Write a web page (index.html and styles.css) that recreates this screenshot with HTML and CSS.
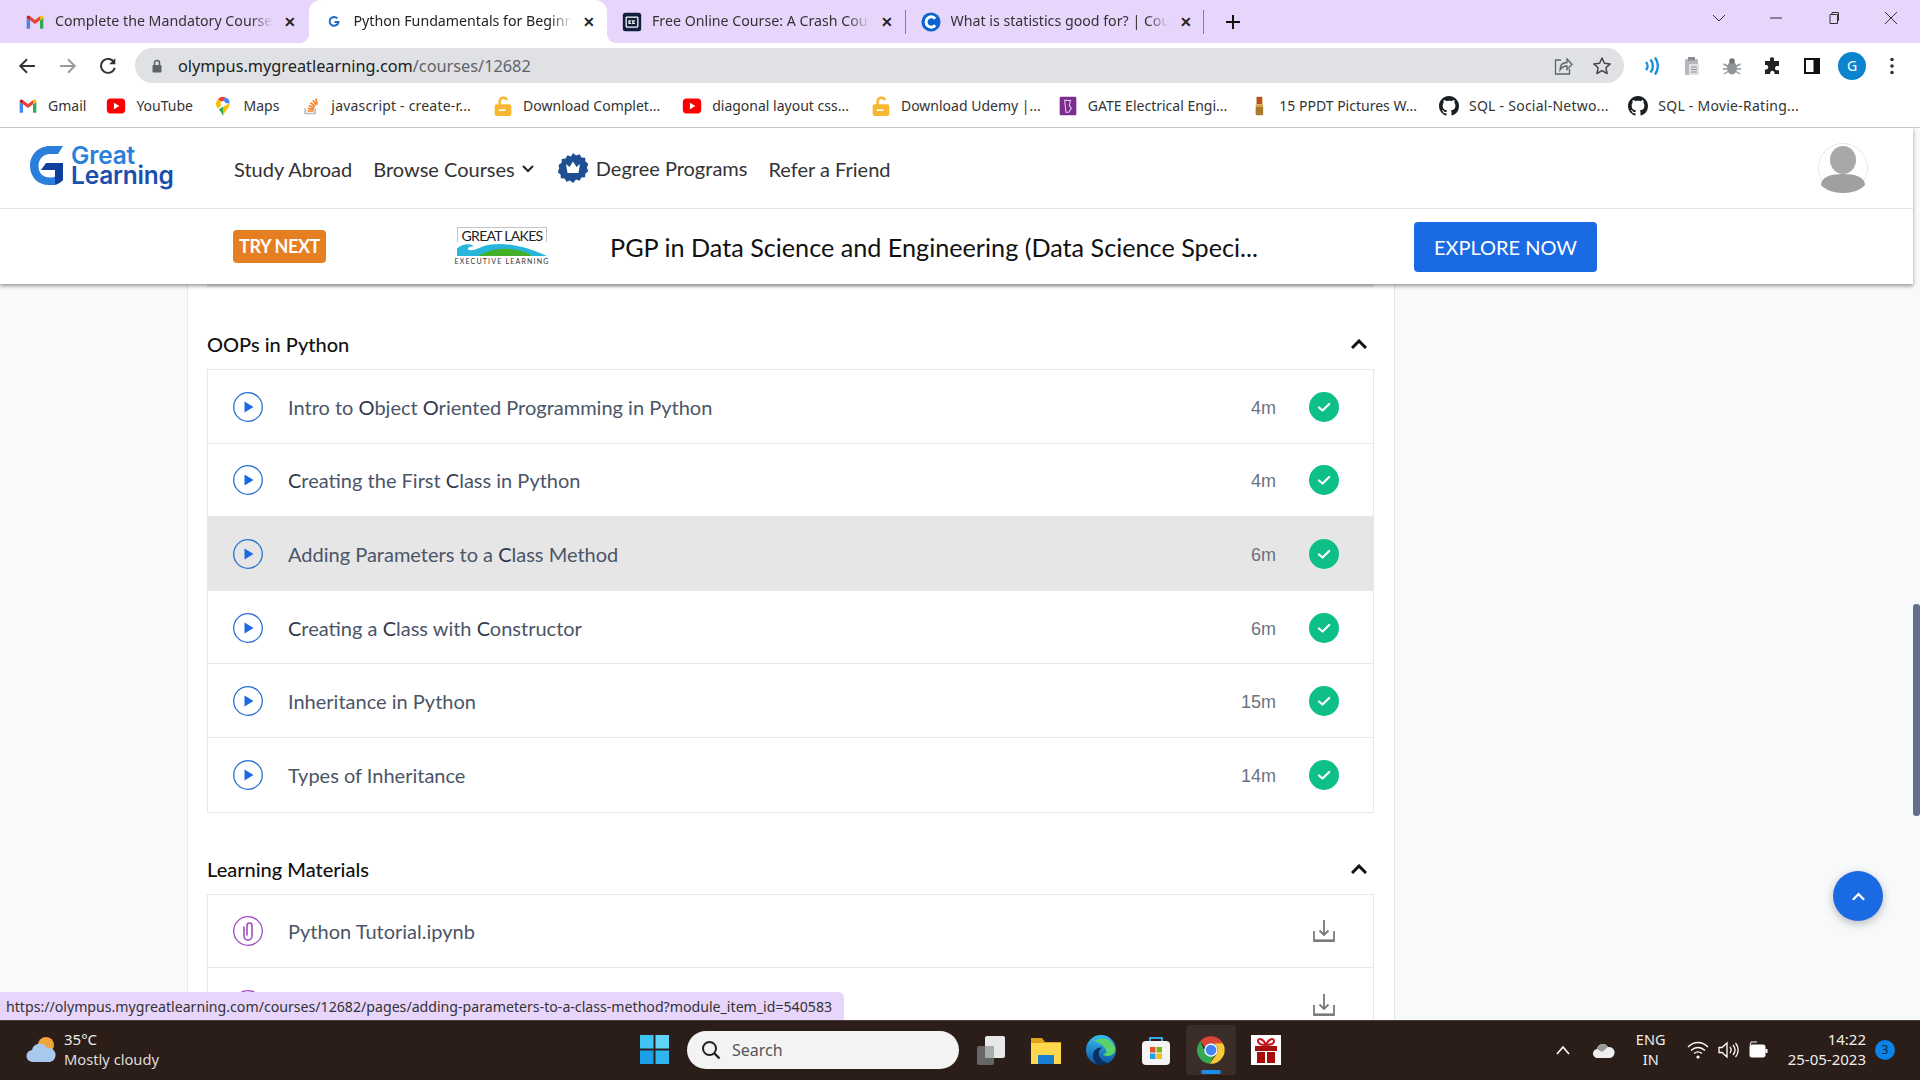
FILE: index.html
```html
<!DOCTYPE html>
<html lang="en">
<head>
    <meta charset="UTF-8">
    <title>Python Fundamentals for Beginners</title>
    <link rel="stylesheet" href="styles.css">
</head>
<body>
    <svg class="defs" width="0" height="0">
        <symbol id="i-gmail" viewBox="0 0 24 24">
            <path fill="#4285F4" d="M2 20h4V10L2 7z"/>
            <path fill="#34A853" d="M18 20h4V7l-4 3z"/>
            <path fill="#EA4335" d="M6 10V5l6 4.500L18 5v5l-6 4.500z"/>
            <path fill="#C5221F" d="M2 7v-.5C2 4.500 4.300 3.400 6 5v5z"/>
            <path fill="#FBBC04" d="M22 7v-.5c0-2-2.300-3.100-4-1.500v5z"/>
        </symbol>
        <symbol id="i-yt" viewBox="0 0 24 24">
            <rect x="1" y="3" width="22" height="18" rx="4.500" fill="#f00"/>
            <path fill="#fff" d="M9.500 8v8l6.500-4z"/>
        </symbol>
        <symbol id="i-maps" viewBox="0 0 24 24">
            <path fill="#34A853" d="M12 24c-1-3-3-5-5-8l5-3z"/>
            <path fill="#FBBC04" d="M12 24c1-3 3-5 5-8 1.500-2 3-4 3-7l-8 4z"/>
            <path fill="#4285F4" d="M20 9A8 8 0 0 0 14.500 1.400L10 8z"/>
            <path fill="#EA4335" d="M14.500 1.400A8 8 0 0 0 6 3.500l5 5z"/>
            <path fill="#FBBC04" d="M6 3.500A8 8 0 0 0 6 15l6-6z"/>
            <circle cx="12" cy="9" r="3" fill="#fff"/>
        </symbol>
        <symbol id="i-so" viewBox="0 0 24 24">
            <path fill="none" stroke="#bcbbbb" stroke-width="2" d="M5 15v6h12v-6"/>
            <path fill="none" stroke="#f48024" stroke-width="2" d="M8 18h7M8.300 14.800l7 1.400M9.300 11.300l6.500 3M11.300 8l5.500 4.600M14.300 5l4 5.700M18 3l1.200 7"/>
        </symbol>
        <symbol id="i-lock" viewBox="0 0 24 24">
            <path fill="none" stroke="#f7b731" stroke-width="3" d="M8 11V6.500a4.500 4.500 0 0 1 8.700-1.500"/>
            <rect x="2" y="10" width="20" height="14" rx="2.500" fill="#f7b731"/>
            <path fill="#fff" d="M7 16h8v2H7z"/>
        </symbol>
        <symbol id="i-gh" viewBox="0 0 16 16">
            <path fill="#1b1f23" d="M8 0C3.580 0 0 3.580 0 8c0 3.540 2.290 6.530 5.470 7.590.4.070.55-.17.55-.38 0-.19-.010-.82-.010-1.490-2.010.37-2.530-.49-2.690-.94-.090-.23-.48-.94-.82-1.130-.28-.15-.68-.52-.010-.53.63-.010 1.080.58 1.230.82.72 1.210 1.870.87 2.330.66.070-.52.28-.87.510-1.070-1.780-.2-3.640-.89-3.640-3.950 0-.87.310-1.590.820-2.150-.080-.2-.360-1.020.080-2.120 0 0 .670-.210 2.200.820.640-.180 1.320-.270 2-.270s1.360.090 2 .270c1.530-1.040 2.200-.820 2.200-.820.440 1.100.160 1.920.080 2.120.510.560.820 1.270.820 2.150 0 3.070-1.870 3.750-3.650 3.950.290.250.540.730.540 1.480 0 1.070-.010 1.930-.010 2.200 0 .210.150.460.550.380A8.013 8.013 0 0 0 16 8c0-4.420-3.580-8-8-8z"/>
        </symbol>
        <symbol id="i-play" viewBox="0 0 30 30">
            <circle cx="15" cy="15" r="14.300" fill="none" stroke="#2a70cf" stroke-width="1.300"/>
            <path fill="#1a6ae4" d="M11.500 9.500v11l9-5.500z"/>
        </symbol>
        <symbol id="i-check" viewBox="0 0 30 30">
            <circle cx="15" cy="15" r="15" fill="#0fbf88"/>
            <path fill="none" stroke="#fff" stroke-width="2.200" stroke-linecap="round" stroke-linejoin="round" d="M10 15.500l3.500 3L20.200 12"/>
        </symbol>
        <symbol id="i-up" viewBox="0 0 16 10">
            <path fill="none" stroke="currentColor" stroke-width="3" d="M1 9l7-7 7 7"/>
        </symbol>
        <symbol id="i-clip" viewBox="0 0 30 30">
            <circle cx="15" cy="15" r="14.300" fill="none" stroke="#a24cc0" stroke-width="1.300"/>
            <path fill="none" stroke="#a24cc0" stroke-width="1.600" stroke-linecap="round" d="M11 11v9a4 4 0 0 0 8 0V9.500a2.500 2.500 0 0 0-5 0V19"/>
        </symbol>
        <symbol id="i-down" viewBox="0 0 24 24">
            <path fill="none" stroke="#7a7a7a" stroke-width="1.800" d="M12 1v15M7.500 11.500L12 16l4.500-4.500M2 12v10h20V12"/>
            <path stroke="#7a7a7a" stroke-width="2.200" d="M2 21.500h20"/>
        </symbol>
    </svg>

    <div class="tabstrip">
        <div class="tab">
            <svg class="tab-icon"><use href="#i-gmail"/></svg>
            <span class="tab-title">Complete the Mandatory Course</span>
            <span class="tab-close">✕</span>
        </div>
        <div class="tab active">
            <svg class="tab-icon" viewBox="-6 -6 36 36"><path fill="none" stroke="#2167c5" stroke-width="3.500" d="M18 5.500A8 8 0 1 0 20 12h-7"/></svg>
            <span class="tab-title">Python Fundamentals for Beginn</span>
            <span class="tab-close">✕</span>
        </div>
        <div class="tab sep">
            <svg class="tab-icon" viewBox="0 0 24 24"><rect x="1" y="1" width="22" height="22" rx="3" fill="#0f1f3d"/><rect x="5" y="6" width="14" height="12" rx="1" fill="none" stroke="#fff" stroke-width="1.500"/><path fill="none" stroke="#fff" stroke-width="1.500" d="M11 10.500H8.500v3H11M15.500 10.500H13v3h2.500"/></svg>
            <span class="tab-title">Free Online Course: A Crash Cou</span>
            <span class="tab-close">✕</span>
        </div>
        <div class="tab sep">
            <svg class="tab-icon" viewBox="0 0 24 24"><circle cx="12" cy="12" r="11.500" fill="#0b63ce"/><path fill="none" stroke="#fff" stroke-width="3.600" d="M17 8a6.200 6.200 0 1 0 0 8"/></svg>
            <span class="tab-title">What is statistics good for? | Cou</span>
            <span class="tab-close">✕</span>
        </div>
        <svg class="new-tab" viewBox="0 0 16 16"><path stroke="#111" stroke-width="2" d="M8 1v14M1 8h14"/></svg>
        <div class="win-controls">
            <svg viewBox="0 0 14 14"><path fill="none" stroke="#333" d="M1 4l6 6 6-6"/></svg>
            <svg viewBox="0 0 14 14"><path stroke="#333" d="M1 7h12"/></svg>
            <svg viewBox="0 0 14 14"><path fill="none" stroke="#333" d="M3 3.500h7.500v9H3zM5 3.500V1.500h6.500v8h-1"/></svg>
            <svg viewBox="0 0 14 14"><path stroke="#333" d="M1 1l12 12M13 1L1 13"/></svg>
        </div>
    </div>

    <div class="toolbar">
        <svg class="tool back" viewBox="0 0 16 16"><path fill="none" stroke="#333" stroke-width="1.700" d="M15 8H2M8 2L2 8l6 6"/></svg>
        <svg class="tool fwd" viewBox="0 0 16 16"><path fill="none" stroke="#9a9a9a" stroke-width="1.700" d="M1 8h13M8 2l6 6-6 6"/></svg>
        <svg class="tool reload" viewBox="0 0 16 16"><path fill="none" stroke="#333" stroke-width="1.700" d="M13.500 5A6.200 6.200 0 1 0 14 9.500"/><path fill="#333" d="M14.500 1v5.500H9z"/></svg>
        <div class="omnibox">
            <svg class="lock" viewBox="0 0 12 14"><path fill="none" stroke="#5f6368" stroke-width="1.500" d="M3.500 6V4a2.500 2.500 0 0 1 5 0v2"/><rect x="1.500" y="6" width="9" height="7.500" rx="1" fill="#5f6368"/></svg>
            <span class="url">olympus.mygreatlearning.com<span class="url-path">/courses/12682</span></span>
            <svg class="omni-share" viewBox="0 0 20 20"><path fill="none" stroke="#5f6368" stroke-width="1.300" d="M8 4H2.500v14h14v-5M7 14c0-5 3-7.500 7-7.500V3l5 5.500-5 5V10c-3 0-5 1-7 4z"/></svg>
            <svg class="omni-star" viewBox="0 0 20 20"><path fill="none" stroke="#444" stroke-width="1.500" stroke-linejoin="round" d="M10 2l2.400 5.300 5.800.6-4.300 3.900 1.200 5.700L10 14.600l-5.100 2.900 1.200-5.700L1.800 7.900l5.800-.6z"/></svg>
        </div>
        <div class="ext-icons">
            <svg viewBox="0 0 20 20"><path fill="none" stroke="#1a8fe0" stroke-width="2.400" d="M4 6a6 6 0 0 1 0 8M8.500 3.500a10 10 0 0 1 0 13M13 1.500a14 14 0 0 1 0 17"/></svg>
            <svg viewBox="0 0 20 20"><rect x="3" y="3" width="13" height="16" rx="1.500" fill="#b4b8bc"/><rect x="6" y="1" width="7" height="3.500" fill="#8a8e92"/><rect x="7" y="8" width="10" height="11" fill="#dfe1e3"/><path stroke="#8a8e92" d="M9 11h6M9 13.500h6M9 16h6"/></svg>
            <svg viewBox="0 0 20 20"><ellipse cx="10" cy="12" rx="5" ry="6.500" fill="#8f9499"/><circle cx="10" cy="5" r="2.800" fill="#6f7478"/><path stroke="#8f9499" stroke-width="1.400" d="M1.500 8l4 2M18.500 8l-4 2M1 13h4M19 13h-4M2 18l4-2.500M18 18l-4-2.500"/></svg>
            <svg viewBox="0 0 20 20"><path fill="#222" d="M8 2.500a2.200 2.200 0 0 1 4 0V5h5v5h-2.300a2.200 2.200 0 0 0 0 4.300H17V18h-4.500v-1.500a2.200 2.200 0 0 0-4.300 0V18H3v-4.500h1.500a2.300 2.300 0 0 0 0-4.500H3V5h5z"/></svg>
            <svg viewBox="0 0 20 20"><path fill="#111" d="M2 2h16v16H2z"/><path fill="#fff" d="M4 4h7.500v12H4z"/></svg>
            <span class="profile">G</span>
            <svg viewBox="0 0 20 20"><circle cx="10" cy="3.500" r="1.800" fill="#333"/><circle cx="10" cy="10" r="1.800" fill="#333"/><circle cx="10" cy="16.500" r="1.800" fill="#333"/></svg>
        </div>
    </div>

    <div class="bookmarks">
        <a class="bm w-gmail"><svg><use href="#i-gmail"/></svg>Gmail</a>
        <a class="bm w-yt"><svg><use href="#i-yt"/></svg>YouTube</a>
        <a class="bm"><svg><use href="#i-maps"/></svg>Maps</a>
        <a class="bm w-js"><svg><use href="#i-so"/></svg>javascript - create-r...</a>
        <a class="bm"><svg><use href="#i-lock"/></svg>Download Complet...</a>
        <a class="bm"><svg><use href="#i-yt"/></svg>diagonal layout css...</a>
        <a class="bm w-udemy"><svg><use href="#i-lock"/></svg>Download Udemy |...</a>
        <a class="bm"><svg viewBox="0 0 24 24"><rect x="2" y="1" width="20" height="22" rx="1.500" fill="#7b2d8e"/><path fill="none" stroke="#e5c8ee" stroke-width="1.300" d="M8 5l7 .5-1.500 6 2.500 3-3 5H9.500z"/></svg>GATE Electrical Engi...</a>
        <a class="bm"><svg viewBox="0 0 24 24"><rect x="9" y="1" width="7" height="9" fill="#b5541c"/><rect x="8" y="10" width="9" height="3" fill="#d9a441"/><rect x="8" y="13" width="9" height="10" rx="1" fill="#a67c2e"/></svg>15 PPDT Pictures W...</a>
        <a class="bm w-gh1 bm-sql"><svg><use href="#i-gh"/></svg>SQL - Social-Netwo...</a>
        <a class="bm bm-sql"><svg><use href="#i-gh"/></svg>SQL - Movie-Rating...</a>
    </div>

    <div class="site-top">
        <header class="site-header">
            <div class="logo">
                <svg class="logo-g" viewBox="0 0 33 39">
                    <path fill="#2a7fdc" d="M33 0l-5 8H20C13 8 8.500 13 8.500 20S13 31.500 20 31.500c2 0 4-.4 5-1V39h-6C8 39 0 31 0 20S8 0 20 0z"/>
                    <path fill="#123f9e" d="M16 17h17v17c-2 2.500-5 4-8 5V24H11z"/>
                </svg>
                <div class="logo-text"><span class="logo-great">Great</span><br>Learning</div>
            </div>
            <nav class="site-nav">
                <a>Study Abroad</a>
                <a class="browse">Browse Courses <svg viewBox="0 0 12 8"><path fill="none" stroke="#222" stroke-width="2" d="M1 1l5 5 5-5"/></svg></a>
                <a class="degree">
                    <svg viewBox="0 0 30 30"><path fill="#1d4f91" d="M15 0l3 2.500 3.600-1.300 1.800 3.300 3.800.3.200 3.800 3 2.300-1.600 3.600 1.600 3.600-3 2.300-.2 3.800-3.800.3-1.800 3.300-3.600-1.300L15 30l-3-2.500-3.600 1.300-1.800-3.300-3.800-.3-.2-3.800-3-2.300 1.600-3.600L.6 12l3-2.300.2-3.800 3.800-.3 1.800-3.300L13 3.500z"/><path fill="#fff" d="M8 11l3.500 3L15 8.500l3.500 5.500L22 11l-1.500 9h-11z"/></svg>
                    Degree Programs
                </a>
                <a>Refer a Friend</a>
            </nav>
            <div class="avatar">
                <svg viewBox="0 0 50 50"><circle cx="25" cy="25" r="24.500" fill="#fff" stroke="#e8e8e8"/><ellipse cx="25" cy="17" rx="13" ry="14" fill="#a8a8a8"/><path fill="#a0a0a0" d="M3 42c0-8 10-11 22-11s22 3 22 11c-4 5-13 8-22 8S7 47 3 42z"/></svg>
            </div>
        </header>
        <div class="try-banner">
            <span class="try-tag">TRY NEXT</span>
            <div class="lakes">
                <span class="lakes-name">GREAT LAKES</span>
                <svg viewBox="0 0 90 15" preserveAspectRatio="none"><path fill="#27b5dc" d="M0 15V7c6-5 13-6 17-2-4-1-7 1-6 3 3 2 8 0 14-3 14-6 40-3 65 10z"/><path fill="#43b02a" d="M22 15c10-9 38-11 52-1v1z"/></svg>
                <span class="lakes-sub">EXECUTIVE LEARNING</span>
            </div>
            <div class="try-title">PGP in Data Science and Engineering (Data Science Speci...</div>
            <a class="explore">EXPLORE NOW</a>
        </div>
    </div>

    <main class="content">
        <div class="card">
            <div class="prev-edge"></div>

            <div class="section-head">
                <h2>OOPs in Python</h2>
                <svg class="collapse"><use href="#i-up"/></svg>
            </div>
            <ul class="items">
                <li class="item"><svg class="ic"><use href="#i-play"/></svg><span class="name">Intro to <span class="dk">O</span>bject <span class="dk">O</span>riented Programming in Python</span><span class="dur">4m</span><svg class="ic"><use href="#i-check"/></svg></li>
                <li class="item"><svg class="ic"><use href="#i-play"/></svg><span class="name"><span class="dk">C</span>reating the First <span class="dk">C</span>lass in Python</span><span class="dur">4m</span><svg class="ic"><use href="#i-check"/></svg></li>
                <li class="item hovered"><svg class="ic"><use href="#i-play"/></svg><span class="name">Adding Parameters to a <span class="dk">C</span>lass Method</span><span class="dur">6m</span><svg class="ic"><use href="#i-check"/></svg></li>
                <li class="item"><svg class="ic"><use href="#i-play"/></svg><span class="name"><span class="dk">C</span>reating a <span class="dk">C</span>lass with <span class="dk">C</span>onstructor</span><span class="dur">6m</span><svg class="ic"><use href="#i-check"/></svg></li>
                <li class="item"><svg class="ic"><use href="#i-play"/></svg><span class="name">Inheritance in Python</span><span class="dur">15m</span><svg class="ic"><use href="#i-check"/></svg></li>
                <li class="item"><svg class="ic"><use href="#i-play"/></svg><span class="name">Types of Inheritance</span><span class="dur">14m</span><svg class="ic"><use href="#i-check"/></svg></li>
            </ul>

            <div class="section-head second">
                <h2>Learning Materials</h2>
                <svg class="collapse"><use href="#i-up"/></svg>
            </div>
            <ul class="items">
                <li class="item"><svg class="ic"><use href="#i-clip"/></svg><span class="name">Python Tutorial.ipynb</span><svg class="ic dl"><use href="#i-down"/></svg></li>
                <li class="item"><svg class="ic"><use href="#i-clip"/></svg><span class="name"></span><svg class="ic dl"><use href="#i-down"/></svg></li>
            </ul>
        </div>

        <div class="scroll-thumb"></div>
        <a class="to-top"><svg viewBox="0 0 16 10"><path fill="none" stroke="#fff" stroke-width="2.400" d="M2 9l6-6 6 6"/></svg></a>
        <div class="status-url">https://olympus.mygreatlearning.com/courses/12682/pages/adding-parameters-to-a-class-method?module_item_id=540583</div>
    </main>

    <footer class="taskbar">
        <div class="weather">
            <svg viewBox="0 0 32 30"><circle cx="21" cy="10" r="8" fill="#f2a33a"/><path fill="#a9c8ee" d="M8 27a6 6 0 0 1-1-12 8 8 0 0 1 15-2 7 7 0 0 1 3 14z"/></svg>
            <div class="weather-text"><div>35°C</div><div class="weather-sub">Mostly cloudy</div></div>
        </div>
        <div class="task-center">
            <svg class="win-logo" viewBox="0 0 30 30"><path fill="#3fc4f4" d="M0 0h14v14H0z"/><path fill="#5fd4f8" d="M16 0h14v14H16z"/><path fill="#1a9fe8" d="M0 16h14v14H0z"/><path fill="#2fb4ee" d="M16 16h14v14H16z"/></svg>
            <div class="search">
                <svg viewBox="0 0 20 20"><circle cx="8.500" cy="8.500" r="6.500" fill="none" stroke="#222" stroke-width="2"/><path stroke="#222" stroke-width="2.400" d="M13 13l5.500 5.500"/></svg>
                Search
            </div>
            <div class="task-apps">
                <svg viewBox="0 0 30 30"><rect x="1" y="11" width="17" height="19" rx="2" fill="#666"/><rect x="9" y="1" width="20" height="22" rx="2" fill="#e8e8e8"/><rect x="9" y="11" width="9" height="12" fill="#aaa"/></svg>
                <svg viewBox="0 0 30 30"><path fill="#e0a418" d="M0 3h11l3 4h16v6H0z"/><path fill="#ffd84d" d="M0 8h30v21H0z"/><rect x="7" y="20" width="16" height="9" fill="#1a7fd4"/></svg>
                <svg viewBox="0 0 30 30"><defs><linearGradient id="edge-a" x1="0" y1="0" x2="0" y2="1"><stop offset="0" stop-color="#35c1f1"/><stop offset="1" stop-color="#0c4f9e"/></linearGradient></defs><circle cx="15" cy="15" r="15" fill="url(#edge-a)"/><path fill="#5ad36a" d="M8 6c8-5 18-2 21 7 1 5-3 8-7 8-3 0-5-1-5-2 3 0 4-2 3-4-2-5-8-8-12-9z"/><path fill="#0b2e63" d="M13 30c-6-3-8-10-4-15 2-2 5-3 7-2-2 1-4 4-3 7 1 4 4 7 9 8-3 2-6 3-9 2z"/></svg>
                <svg viewBox="0 0 30 30"><path fill="none" stroke="#35a7e8" stroke-width="2" d="M9 8V3h12v5"/><rect x="1" y="6" width="28" height="24" rx="4" fill="#f4f4f4"/><path fill="#e8502a" d="M9 12h5.500v5.500H9z"/><path fill="#7cb518" d="M15.500 12H21v5.500h-5.500z"/><path fill="#1a9fe8" d="M9 18.500h5.500V24H9z"/><path fill="#f5b915" d="M15.500 18.500H21V24h-5.500z"/></svg>
                <div class="chrome-tile">
                    <svg viewBox="0 0 24 24"><path fill="#db4437" d="M12 1a11 11 0 0 1 9.500 5.500H12a5.500 5.500 0 0 0-4.900 3L3.400 5A11 11 0 0 1 12 1z"/><path fill="#34a853" d="M3.400 5A11 11 0 0 0 11 23l4.200-7.300a5.500 5.500 0 0 1-8-2.400z"/><path fill="#fcc934" d="M21.500 6.500H12a5.500 5.500 0 0 1 4.800 8.300L11 23h1A11 11 0 0 0 21.500 6.500z"/><circle cx="12" cy="12" r="5.400" fill="#fff"/><circle cx="12" cy="12" r="4.300" fill="#4285f4"/></svg>
                </div>
                <svg viewBox="0 0 30 30"><rect width="30" height="30" fill="#fff"/><path fill="#a80d0d" d="M4 11h22v5H4zM6 17h8v11H6zM16 17h8v11h-8z"/><path fill="none" stroke="#c8141e" stroke-width="2" d="M15 10C12 3 7 3 7 6s4 4 8 4c4 0 8-1 8-4s-5-3-8 4z"/></svg>
            </div>
        </div>
        <div class="tray">
            <svg class="tray-up" viewBox="0 0 16 10"><path fill="none" stroke="#fff" stroke-width="1.600" d="M2 9l6-7 6 7"/></svg>
            <svg class="tray-cloud" viewBox="0 0 22 16"><path fill="#eee" d="M5 16a4.500 4.500 0 0 1-1-9 6 6 0 0 1 11-2 5 5 0 0 1 2 11z"/><path fill="#999" d="M4 7a6 6 0 0 1 11-2l-6 5z"/></svg>
            <div class="lang"><div>ENG</div><div>IN</div></div>
            <svg class="tray-ic" viewBox="0 0 22 18"><path fill="none" stroke="#fff" stroke-width="1.300" d="M1 6c6-6 14-6 20 0M4 9.500c4-4 10-4 14 0M7 12.500c2.500-2 5.500-2 8 0"/><circle cx="11" cy="16" r="1.600" fill="#fff"/></svg>
            <svg class="tray-ic" viewBox="0 0 22 18"><path fill="none" stroke="#fff" stroke-width="1.300" d="M2 6.500h3L10 2v14l-5-4.500H2zM13 6c1.500 2 1.500 4 0 6M16 4c2.500 3 2.500 7 0 10M18.500 2c3.500 4 3.500 10 0 14"/></svg>
            <svg class="tray-ic" viewBox="0 0 22 18"><rect x="3" y="4" width="15" height="12" rx="1.500" fill="#fff" stroke="#fff"/><rect x="18.500" y="8" width="2" height="4" fill="#fff"/><path fill="none" stroke="#fff" d="M3 4L4 1h6"/></svg>
            <div class="clock"><div>14:22</div><div>25-05-2023</div></div>
            <span class="notif">3</span>
        </div>
    </footer>
</body>
</html>
```

FILE: styles.css
```css
* {
    margin: 0;
    padding: 0;
    box-sizing: border-box;
}

html, body {
    width: 1920px;
    height: 1080px;
    overflow: hidden;
}

body {
    display: flex;
    flex-direction: column;
    font-family: "Noto Sans", sans-serif;
    background: #f8f9fb;
    color: #222;
}

.defs {
    position: absolute;
}

ul {
    list-style: none;
}

/* browser chrome */
.tabstrip {
    height: 43px;
    background: #e8d5fc;
    display: flex;
    align-items: center;
    padding-left: 10px;
    flex: none;
}

.tab {
    width: 298.5px;
    height: 43px;
    display: flex;
    align-items: center;
    padding-left: 15px;
    position: relative;
    font-size: 14.2px;
    color: #333;
}

.tab.active {
    background: #fff;
    border-radius: 12px 12px 0 0;
    color: #222;
}

.tab.active::before,
.tab.active::after {
    content: "";
    position: absolute;
    bottom: 0;
    width: 10px;
    height: 10px;
}

.tab.active::before {
    left: -10px;
    background: radial-gradient(circle at 0 0, #e8d5fc 10px, #fff 10.5px);
}

.tab.active::after {
    right: -10px;
    background: radial-gradient(circle at 100% 0, #e8d5fc 10px, #fff 10.5px);
}

.tab.sep::after {
    content: "";
    position: absolute;
    right: 0;
    top: 10px;
    height: 24px;
    width: 1px;
    background: #8a7d99;
}

.tab-icon {
    width: 20px;
    height: 20px;
    flex: none;
}

.tab-title {
    margin-left: 10px;
    margin-bottom: 2px;
    width: 218px;
    white-space: nowrap;
    -webkit-mask-image: linear-gradient(to right, #000 90%, transparent 100%);
    mask-image: linear-gradient(to right, #000 90%, transparent 100%);
}

.tab-close {
    margin-left: 10px;
    width: 14px;
    text-align: center;
    font-size: 14px;
    font-weight: 700;
    color: #222;
}

.new-tab {
    width: 16px;
    height: 16px;
    margin-left: 21px;
}

.win-controls {
    margin-left: auto;
    padding-right: 22px;
    height: 100%;
    display: flex;
    gap: 43.5px;
    align-items: center;
    padding-bottom: 8px;
}

.win-controls svg {
    width: 14px;
    height: 14px;
}

.toolbar {
    height: 44px;
    background: #fff;
    display: flex;
    align-items: center;
    flex: none;
    padding-top: 1px;
}

.tool {
    width: 18px;
    height: 18px;
    flex: none;
}

.back { margin-left: 18px; }
.fwd { margin-left: 23px; }
.reload { margin-left: 22px; }

.omnibox {
    margin-left: 18px;
    width: 1489px;
    height: 35px;
    border-radius: 18px;
    background: #dfe1e5;
    display: flex;
    align-items: center;
    padding-left: 16px;
    flex: none;
}

.lock {
    width: 12px;
    height: 14px;
}

.url {
    margin-left: 15px;
    font-size: 16.3px;
    color: #202124;
}

.url-path {
    color: #5f6368;
}

.omni-share {
    width: 20px;
    height: 20px;
    margin-left: auto;
}

.omni-star {
    width: 20px;
    height: 20px;
    margin-left: 19px;
    margin-right: 12px;
}

.ext-icons {
    display: flex;
    align-items: center;
    margin-left: 18px;
    gap: 20px;
}

.ext-icons svg {
    width: 20px;
    height: 20px;
    flex: none;
}

.profile {
    width: 28px;
    height: 28px;
    margin: 0 -4px 0 -4px;
    border-radius: 50%;
    background: #0b84d0;
    color: #fff;
    font-size: 14px;
    line-height: 28px;
    text-align: center;
}

.bookmarks {
    height: 41px;
    background: #fff;
    border-bottom: 1px solid #cfcfcf;
    display: flex;
    align-items: center;
    padding-left: 18px;
    padding-bottom: 3px;
    flex: none;
    font-size: 14px;
    color: #333;
}

.bm {
    display: flex;
    align-items: center;
    white-space: nowrap;
    margin-right: 22px;
}

.bm svg {
    width: 20px;
    height: 20px;
    margin-right: 10px;
    flex: none;
}

.bm-sql {
    letter-spacing: 0.25px;
}

.w-gmail { margin-right: 20px; }
.w-yt { margin-right: 20.5px; }
.w-js { margin-right: 22px; letter-spacing: 0.2px; }
.w-udemy { margin-right: 17px; }
.w-gh1 { margin-right: 19.5px; }

/* site header */
.site-top {
    margin-right: 7px;
    flex: none;
    position: relative;
    z-index: 2;
    background: #fff;
    box-shadow: 0 2px 4px rgba(0, 0, 0, 0.4);
    font-family: Lato, sans-serif;
}

.site-header {
    height: 81px;
    display: flex;
    align-items: center;
    padding-left: 30px;
    padding-right: 45px;
    border-bottom: 1px solid #e4e4e4;
}

.logo {
    display: flex;
    align-items: center;
    width: 204px;
    flex: none;
    padding-bottom: 6px;
}

.logo-g {
    width: 33px;
    height: 39px;
    flex: none;
}

.logo-text {
    margin-left: 8px;
    font-family: Inter, sans-serif;
    font-weight: 600;
    font-size: 24.5px;
    line-height: 20px;
    letter-spacing: -0.2px;
    color: #1a4fb0;
}

.logo-great {
    color: #2a7fdc;
}

.site-nav {
    display: flex;
    align-items: center;
    gap: 21px;
    margin-top: 1px;
    font-size: 20px;
    color: #333;
}

.browse {
    display: flex;
    align-items: center;
    gap: 7px;
}

.browse svg {
    width: 12px;
    height: 8px;
}

.degree {
    display: flex;
    align-items: center;
    gap: 8px;
    margin-left: 3px;
    margin-top: -1px;
}

.degree svg {
    width: 30px;
    height: 30px;
}

.avatar {
    margin-left: auto;
    width: 50px;
    height: 50px;
}

.try-banner {
    height: 75px;
    display: flex;
    align-items: center;
    padding-left: 233px;
}

.try-tag {
    width: 93px;
    height: 33px;
    line-height: 33px;
    text-align: center;
    background: #e67e22;
    border-radius: 4px;
    color: #fff;
    font-weight: 700;
    font-size: 18px;
    letter-spacing: -0.4px;
    flex: none;
}

.lakes {
    margin-left: 131px;
    width: 90px;
    flex: none;
    display: flex;
    flex-direction: column;
    align-items: center;
}

.lakes svg {
    width: 90px;
    height: 14px;
    display: block;
}

.lakes-name {
    width: 100%;
    height: 15px;
    border: 1px solid #c4c4c4;
    border-bottom: none;
    text-align: center;
    font-size: 14px;
    line-height: 15px;
    letter-spacing: -0.7px;
    color: #222;
    white-space: nowrap;
}

.lakes-sub {
    margin-top: 1px;
    font-size: 7px;
    line-height: 9px;
    letter-spacing: 1.2px;
    color: #333;
    white-space: nowrap;
}

.try-title {
    margin-left: 63px;
    width: 804px;
    flex: none;
    font-size: 25.2px;
    color: #111;
    white-space: nowrap;
}

.explore {
    width: 183px;
    height: 50px;
    line-height: 50px;
    text-align: center;
    background: #1a6ae4;
    color: #fff;
    border-radius: 4px;
    font-size: 20px;
    flex: none;
}

/* course content */
.content {
    flex: 1;
    position: relative;
    overflow: hidden;
    font-family: Lato, sans-serif;
}

.card {
    margin-left: 187px;
    width: 1208px;
    height: 100%;
    background: #fff;
    border-left: 1px solid #e5e7eb;
    border-right: 1px solid #e5e7eb;
    padding: 0 20px 0 19px;
}

.prev-edge {
    height: 3px;
    background: #e8e8e8;
}

.section-head {
    height: 36px;
    margin-top: 39px;
    margin-bottom: 7px;
    display: flex;
    align-items: center;
    justify-content: space-between;
    padding-right: 7px;
}

.section-head.second {
    margin-top: 38px;
    margin-bottom: 7px;
}

.section-head h2 {
    font-size: 20px;
    font-weight: 500;
    color: #111;
}

.collapse {
    width: 16px;
    height: 10px;
    color: #111;
}

.items {
    border: 1px solid #e8e8e8;
}

.item {
    height: 73.6px;
    display: flex;
    align-items: center;
    padding: 1px 34px 0 25px;
    border-bottom: 1px solid #e8e8e8;
}

.item:last-child {
    border-bottom: none;
}

.item.hovered {
    background: #e6e6e6;
}

.ic {
    width: 30px;
    height: 30px;
    flex: none;
}

.dl {
    width: 24px;
    height: 24px;
    margin-right: 3px;
}

.name {
    margin-left: 25px;
    flex: 1;
    font-size: 20px;
    color: #4a5568;
}

.dk {
    color: #2d3748;
}

.dur {
    margin-right: 33px;
    margin-top: 3px;
    font-family: "Liberation Sans", sans-serif;
    font-size: 18px;
    color: #6b7280;
}

.scroll-thumb {
    position: absolute;
    left: 1913px;
    top: 320px;
    width: 7px;
    height: 212px;
    border-radius: 3px;
    background: #64708a;
}

.to-top {
    position: absolute;
    left: 1833px;
    top: 587px;
    width: 50px;
    height: 50px;
    border-radius: 50%;
    background: #1a6ae4;
    box-shadow: 0 3px 10px rgba(0, 0, 0, 0.25);
    display: flex;
    align-items: center;
    justify-content: center;
}

.to-top svg {
    width: 15px;
    height: 10px;
}

.status-url {
    position: absolute;
    left: 0;
    bottom: 0;
    width: 844px;
    height: 28px;
    line-height: 28px;
    padding-left: 6px;
    padding-top: 1px;
    background: #e8d5fc;
    border-top-right-radius: 6px;
    font-family: "Noto Sans", sans-serif;
    font-size: 14.15px;
    color: #333;
    white-space: nowrap;
}

/* windows taskbar */
.taskbar {
    height: 60px;
    flex: none;
    background: #2b1d18;
    border-top: 1px solid #4a3d37;
    display: flex;
    align-items: center;
    padding-bottom: 2px;
    color: #eee;
    font-size: 15px;
    position: relative;
    z-index: 3;
}

.weather {
    display: flex;
    align-items: center;
    width: 640px;
    padding-left: 25px;
    line-height: 20px;
    flex: none;
}

.weather svg {
    width: 32px;
    height: 30px;
    margin-right: 7px;
}

.weather-text {
    margin-top: -2px;
}

.weather-sub {
    color: #ddd;
    font-size: 14.7px;
}

.task-center {
    display: flex;
    align-items: center;
    flex: none;
}

.win-logo {
    width: 29px;
    height: 29px;
}

.search {
    margin-left: 18px;
    width: 272px;
    height: 38px;
    border-radius: 19px;
    background: #f3f3f3;
    color: #555;
    font-size: 16px;
    display: flex;
    align-items: center;
    gap: 11px;
    padding-left: 14px;
}

.search svg {
    width: 20px;
    height: 20px;
}

.task-apps {
    margin-left: 17px;
    display: flex;
    align-items: center;
    gap: 25px;
}

.task-apps > svg {
    width: 30px;
    height: 30px;
}

.chrome-tile {
    width: 50px;
    height: 50px;
    margin: 0 -10px;
    border-radius: 4px;
    background: #3b2e29;
    display: flex;
    align-items: center;
    justify-content: center;
    position: relative;
}

.chrome-tile svg {
    width: 30px;
    height: 30px;
}

.chrome-tile::after {
    content: "";
    position: absolute;
    bottom: 1px;
    left: 15px;
    width: 20px;
    height: 4px;
    border-radius: 2px;
    background: #1a8fe8;
}

.tray {
    margin-left: auto;
    display: flex;
    align-items: center;
    padding-right: 54px;
    line-height: 20px;
    font-size: 15px;
}

.tray-up {
    width: 16px;
    height: 10px;
}

.tray-cloud {
    width: 22px;
    height: 16px;
    margin-left: 22px;
}

.lang {
    margin-left: 18px;
    margin-top: -2px;
    text-align: center;
    width: 36px;
    font-size: 14.5px;
}

.tray-ic {
    width: 22px;
    height: 18px;
    margin-left: 8px;
}

.lang + .tray-ic {
    margin-left: 18px;
}

.clock {
    margin-left: 19px;
    margin-top: -2px;
    text-align: right;
}

.notif {
    position: absolute;
    left: 1875px;
    top: 19px;
    width: 20px;
    height: 20px;
    line-height: 20px;
    text-align: center;
    border-radius: 50%;
    background: #0a84e8;
    color: #123;
    font-size: 12px;
}
```
